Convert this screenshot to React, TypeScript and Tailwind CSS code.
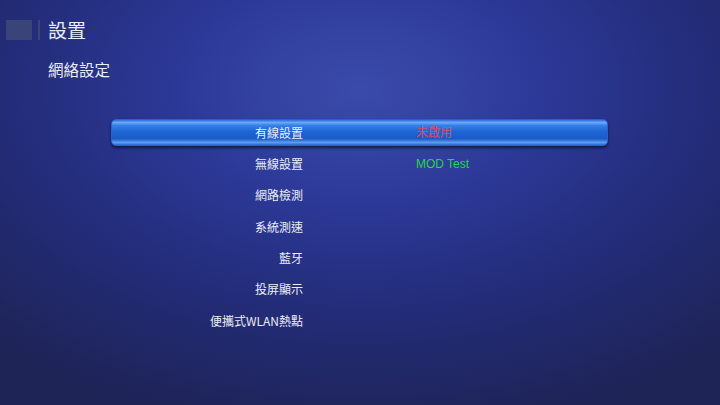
import React from "react";

const rows: { label: string; value?: string; color?: string }[] = [
  { label: "有線設置", value: "未啟用", color: "text-[#e0485a]" },
  { label: "無線設置", value: "MOD Test", color: "text-[#22d845]" },
  { label: "網路檢測" },
  { label: "系統測速" },
  { label: "藍牙" },
  { label: "投屏顯示" },
  { label: "便攜式WLAN熱點" },
];

export default function App() {
  return (
    <div
      className="w-[720px] h-[405px] overflow-hidden text-[#eceef6] bg-[radial-gradient(ellipse_75%_85%_at_50%_22%,#3b4bab_0%,#2c3896_35%,#232c78_65%,#1e2456_100%)]"
      style={{ fontFamily: '"Noto Sans CJK TC", "Noto Sans", "Liberation Sans", sans-serif' }}
    >
      <div className="flex items-center pt-[20px] pl-[6px] h-[40px]">
        <div className="w-[26px] h-[20px] bg-[#3a4478]" />
        <div className="w-[2px] h-[20px] ml-[6px] bg-[#3a4478]" />
        <div className="ml-[8px] text-[19px] leading-[20px]">設置</div>
      </div>
      <div className="pl-[48px] mt-[20px] text-[15.5px] leading-[18px]">網絡設定</div>
      <div className="ml-[111px] w-[497px] mt-[39px] flex flex-col">
        {rows.map((r, i) => (
          <div key={i} className="h-[31.33px] flex items-center relative">
            {i === 0 && (
              <div className="absolute left-0 right-0 top-[2px] h-[27px] rounded-[5px] border border-[#2a5fd4] bg-[linear-gradient(to_bottom,#2c6ee0_0%,#6aa8f6_10%,#3580e8_22%,#1e66d6_45%,#1a5ac6_75%,#5b9cf0_90%,#2a68d8_100%)] shadow-[0_2px_3px_rgba(8,12,40,0.7)]" />
            )}
            <div className="relative w-[192px] text-right text-[12px] leading-[14px]">{r.label}</div>
            {r.value && (
              <div className={`relative ml-[113px] text-[12px] leading-[14px] ${r.color}`} style={{ fontFamily: '"Liberation Sans", "Noto Sans CJK TC", sans-serif' }}>
                {r.value}
              </div>
            )}
          </div>
        ))}
      </div>
    </div>
  );
}
